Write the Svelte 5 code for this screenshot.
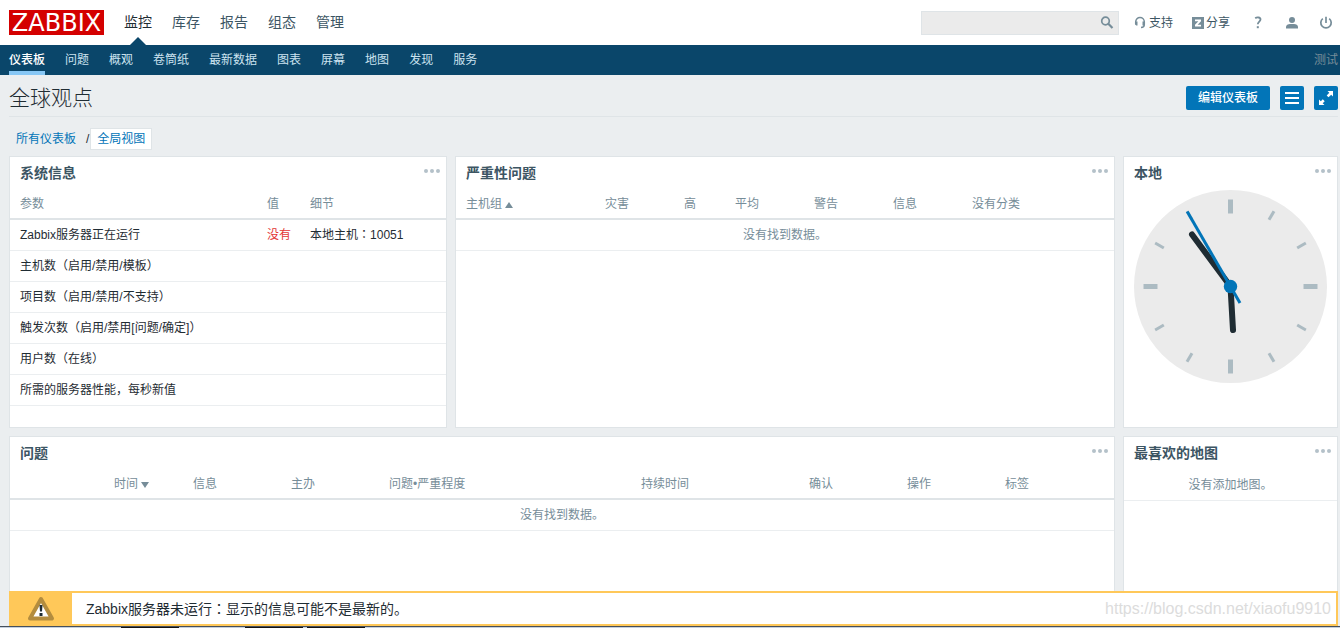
<script lang="ts">
	interface Column {
		label: string
		width?: number
		sort?: 'asc' | 'desc'
	}

	const mainMenu = ['监控', '库存', '报告', '组态', '管理']
	const subMenu = ['仪表板', '问题', '概观', '卷筒纸', '最新数据', '图表', '屏幕', '地图', '发现', '服务']

	const infoColumns: Column[] = [{ label: '参数', width: 247 }, { label: '值', width: 43 }, { label: '细节' }]
	const infoRows = [
		{ name: 'Zabbix服务器正在运行', value: '没有', details: '本地主机：10051' },
		{ name: '主机数（启用/禁用/模板）' },
		{ name: '项目数（启用/禁用/不支持）' },
		{ name: '触发次数（启用/禁用[问题/确定]）' },
		{ name: '用户数（在线）' },
		{ name: '所需的服务器性能，每秒新值' }
	]

	const severityColumns: Column[] = [
		{ label: '主机组', width: 139, sort: 'asc' },
		{ label: '灾害', width: 79 },
		{ label: '高', width: 51 },
		{ label: '平均', width: 79 },
		{ label: '警告', width: 79 },
		{ label: '信息', width: 79 },
		{ label: '没有分类' }
	]

	const problemColumns: Column[] = [
		{ label: '', width: 94 },
		{ label: '时间', width: 79, sort: 'desc' },
		{ label: '信息', width: 98 },
		{ label: '主办', width: 98 },
		{ label: '问题•严重程度', width: 252 },
		{ label: '持续时间', width: 168 },
		{ label: '确认', width: 98 },
		{ label: '操作', width: 98 },
		{ label: '标签' }
	]

	const hours = Array.from({ length: 12 }, (_, i) => i)
</script>

<!-- full-width punctuation sits in the middle of its box -->
{#snippet text(value: string)}
	{#each value.split(/([（）：])/) as part}{#if /^[（）：]$/.test(part)}<span class="punct">{part}</span>{:else}{part}{/if}{/each}
{/snippet}

{#snippet widgetHead(title: string)}
	<header class="widget-head">
		<h2>{title}</h2>
		<button class="dots" aria-label="{title} 操作">
			<svg width="16" height="4" viewBox="0 0 16 4" fill="#b4c1c9">
				<circle cx="2" cy="2" r="2" />
				<circle cx="8" cy="2" r="2" />
				<circle cx="14" cy="2" r="2" />
			</svg>
		</button>
	</header>
{/snippet}

{#snippet tableHead(columns: Column[])}
	<colgroup>
		{#each columns as column}
			<col style={column.width ? `width: ${column.width}px` : undefined} />
		{/each}
	</colgroup>
	<thead>
		<tr>
			{#each columns as column}
				<th>
					{#if column.sort}
						<a href="#sort">{column.label}<span class="arrow {column.sort}"></span></a>
					{:else}
						{column.label}
					{/if}
				</th>
			{/each}
		</tr>
	</thead>
{/snippet}

{#snippet emptyRow(columns: Column[])}
	<tbody>
		<tr><td class="empty" colspan={columns.length}>没有找到数据。</td></tr>
	</tbody>
{/snippet}

<div class="page">
	<header class="top">
		<a class="logo" href="#home">ZABBIX</a>
		<nav class="main-menu">
			{#each mainMenu as item, i}
				<a href="#menu" class:active={i === 0}>{item}</a>
			{/each}
		</nav>
		<form class="search">
			<input type="text" aria-label="搜索" />
			<button type="button" aria-label="搜索">
				<svg width="14" height="14" viewBox="0 0 14 14" fill="none" stroke="#768d99">
					<circle cx="5.5" cy="5" r="3.8" stroke-width="1.7" />
					<path d="M8.3 7.8l4.2 4.2" stroke-width="2.2" />
				</svg>
			</button>
		</form>
		<a class="tool support" href="#support">
			<svg width="12" height="14" viewBox="0 0 12 14">
				<path d="M1.7 8V5.800a4.300 4.300 0 0 1 8.600 0V8.500c0 2-1 3-3.300 3" fill="none" stroke="#768d99" stroke-width="1.5" />
				<path d="M1 5.500h2.500v4H2.300L1 8.500zM11 5.500H8.500v4h1.200L11 8.500z" fill="#768d99" />
			</svg>
			支持
		</a>
		<a class="tool share" href="#share">
			<svg width="12" height="12" viewBox="0 0 12 12">
				<path d="M0 0h12v12H0z" fill="#768d99" />
				<path d="M3 2.500h6v1.800L5.600 7.700H9v1.800H3V7.700l3.400-3.400H3z" fill="#fff" />
			</svg>
			分享
		</a>
		<a class="tool icon" href="#help" aria-label="帮助">
			<svg width="14" height="14" viewBox="0 0 14 14">
				<path d="M4.200 2.300C5.800 1 9.500 1.100 9.500 3.500c0 2-2.700 2.200-2.700 4.800" fill="none" stroke="#768d99" stroke-width="1.8" />
				<path d="M5.800 10.200h2v2h-2z" fill="#768d99" />
			</svg>
		</a>
		<a class="tool icon" href="#profile" aria-label="用户">
			<svg width="14" height="14" viewBox="0 0 14 14" fill="#768d99">
				<circle cx="7" cy="4" r="3" />
				<path d="M1 12.500V11C1 9 3 8.300 5 8h4c2 .3 4 1 4 3v1.500z" />
			</svg>
		</a>
		<a class="tool icon" href="#logout" aria-label="退出">
			<svg width="14" height="14" viewBox="0 0 14 14" fill="none" stroke="#768d99" stroke-width="1.7">
				<path d="M3.800 2.600a5.200 5.200 0 1 0 6.400 0M7 .8v6.200" />
			</svg>
		</a>
	</header>

	<nav class="sub-menu">
		{#each subMenu as item, i}
			<a href="#view" class:active={i === 0}>{item}</a>
		{/each}
		<span class="server">测试</span>
	</nav>

	<main>
		<div class="title-bar">
			<h1>全球观点</h1>
			<button class="btn">编辑仪表板</button>
			<button class="btn square" aria-label="菜单">
				<svg width="16" height="16" viewBox="0 0 16 16" stroke="#fff" stroke-width="2">
					<path d="M1 3h14M1 8h14M1 13h14" />
				</svg>
			</button>
			<button class="btn square" aria-label="全屏">
				<svg width="16" height="16" viewBox="0 0 16 16">
					<path d="M9.500 1H15v5.500l-1.800-1.800-2.700 2.600-1.800-1.800 2.600-2.700zM6.500 15H1V9.500l1.800 1.800 2-2L6.700 11.200l-2 2z" fill="#fff" />
				</svg>
			</button>
		</div>

		<div class="crumbs">
			<a href="#all">所有仪表板</a>
			<span class="slash">/</span>
			<a class="current" href="#global">全局视图</a>
		</div>

		<div class="dashboard">
			<section class="widget">
				{@render widgetHead('系统信息')}
				<table>
					{@render tableHead(infoColumns)}
					<tbody>
						{#each infoRows as row}
							<tr>
								<td>{@render text(row.name)}</td>
								<td class="red">{row.value ?? ''}</td>
								<td>{@render text(row.details ?? '')}</td>
							</tr>
						{/each}
					</tbody>
				</table>
			</section>

			<section class="widget">
				{@render widgetHead('严重性问题')}
				<table>
					{@render tableHead(severityColumns)}
					{@render emptyRow(severityColumns)}
				</table>
			</section>

			<section class="widget">
				{@render widgetHead('本地')}
				<svg class="clock" viewBox="-96.5 -96.5 193 193">
					<circle r="96.5" fill="#ebebeb" />
					{#each hours as hour}
						{#if hour % 3 === 0}
							<path d="M0-87v14" stroke="#acbbc2" stroke-width="5" transform="rotate({hour * 30})" />
						{:else}
							<path d="M0-87v10" stroke="#acbbc2" stroke-width="3" transform="rotate({hour * 30})" />
						{/if}
					{/each}
					<path d="M0 0L2.500 43.500M0 0L-38.500-52" stroke="#1f2c33" stroke-width="6" stroke-linecap="round" />
					<path d="M9.500 16.500L-43.300-75" stroke="#0275b8" stroke-width="3" />
					<circle r="6.700" fill="#0275b8" />
				</svg>
			</section>

			<section class="widget wide">
				{@render widgetHead('问题')}
				<table>
					{@render tableHead(problemColumns)}
					{@render emptyRow(problemColumns)}
				</table>
			</section>

			<section class="widget">
				{@render widgetHead('最喜欢的地图')}
				<p class="empty no-maps">没有添加地图。</p>
			</section>
		</div>
	</main>

	<footer>
		<div class="message" role="alert">
			<div class="warn">
				<svg width="28" height="26" viewBox="0 0 28 26">
					<path d="M14 3L25 22.500H3z" fill="#fff" stroke="#b38c3e" stroke-width="4" stroke-linejoin="round" />
					<path d="M12.500 9h3l-.5 6.500h-2zM12.500 17h3v3h-3z" fill="#1f2c33" />
				</svg>
			</div>
			<p>{@render text('Zabbix服务器未运行：显示的信息可能不是最新的。')}</p>
			<span class="watermark">https://blog.csdn.net/xiaofu9910</span>
		</div>
		<div class="taskbar"><i></i><i></i><i></i></div>
	</footer>
</div>

<style>
	:global(body) {
		background: #ebeef0;
		overflow: hidden;
	}

	.page {
		height: 100vh;
		overflow: hidden;
		color: #1f2c33;
		font: 12px/18px 'Liberation Sans', 'Noto Sans CJK SC', sans-serif;
	}

	.punct {
		font-family: 'Noto Sans CJK TC', sans-serif;
		line-height: 0;
	}

	a {
		color: inherit;
		text-decoration: none;
	}

	svg {
		display: block;
		flex: none;
	}

	h1,
	h2,
	p {
		margin: 0;
	}

	button {
		padding: 0;
		border: 0;
		background: none;
		font: inherit;
	}

	.top {
		display: flex;
		align-items: center;
		height: 45px;
		padding: 0 7px 0 9px;
		background: #fff;
	}

	.logo {
		width: 95px;
		height: 25px;
		margin-right: 20px;
		background: #d40000;
		color: #fff;
		font: 24px/26px 'DejaVu Sans', sans-serif;
		text-align: center;
	}

	.main-menu {
		display: flex;
		gap: 20px;
		margin-right: auto;
		color: #3c5563;
		font-size: 14px;
		line-height: 45px;
	}

	.main-menu a {
		position: relative;
	}

	.main-menu .active {
		color: #1f2c33;
	}

	.main-menu .active::after {
		content: '';
		position: absolute;
		bottom: 0;
		left: 6px;
		border: 8px solid transparent;
		border-top: 0;
		border-bottom-color: #0a466a;
	}

	.search {
		display: flex;
		align-items: center;
		box-sizing: border-box;
		width: 198px;
		height: 24px;
		margin-right: 15px;
		padding-right: 4px;
		border: 1px solid #dfe4e7;
		background: #ebebeb;
	}

	.search input {
		flex: 1;
		min-width: 0;
		border: 0;
		background: none;
	}

	.tool {
		display: flex;
		align-items: center;
		color: #3c5563;
	}

	.support {
		gap: 3px;
		margin-right: 19px;
	}

	.share {
		gap: 2px;
		margin-right: 1px;
	}

	.icon {
		margin-left: 20px;
	}

	.sub-menu {
		display: flex;
		gap: 20px;
		height: 30px;
		padding: 0 2px 0 9px;
		background: #0a466a;
		color: #cce3f0;
		line-height: 30px;
	}

	.sub-menu .active {
		box-sizing: border-box;
		border-bottom: 4px solid #87c7f5;
		color: #fff;
		font-weight: 500;
	}

	.server {
		margin-left: auto;
		color: #768d99;
	}

	main {
		padding: 0 2px 0 9px;
	}

	.title-bar {
		display: flex;
		align-items: center;
		gap: 10px;
		padding: 9px 0 5px;
		border-bottom: 1px solid #dfe4e7;
	}

	h1 {
		margin-right: auto;
		font-size: 21px;
		font-weight: 300;
		line-height: 27px;
	}

	.btn {
		height: 24px;
		padding: 0 12px;
		border-radius: 2px;
		background: #0275b8;
		color: #fff;
		font-weight: 500;
	}

	.square {
		padding: 0 4px;
	}

	.crumbs {
		display: flex;
		align-items: center;
		padding: 11px 0 6px 7px;
		color: #0275b8;
	}

	.slash {
		margin-left: 10px;
		color: #1f2c33;
	}

	.current {
		margin-left: 1px;
		padding: 1px 6px;
		border: 1px solid #dfe4e7;
		background: #fff;
	}

	.dashboard {
		display: grid;
		grid-template-columns: 438fr 660fr 215fr;
		grid-auto-rows: 272px;
		gap: 8px;
	}

	.widget {
		border: 1px solid #dfe4e7;
		background: #fff;
	}

	.wide {
		grid-column: span 2;
	}

	.widget-head {
		display: flex;
		align-items: flex-start;
		justify-content: space-between;
		height: 33px;
		padding: 0 6px 0 10px;
	}

	h2 {
		color: #3c5563;
		font-size: 14px;
		font-weight: 700;
		line-height: 33px;
	}

	.dots {
		margin-top: 12px;
	}

	table {
		width: 100%;
		border-collapse: separate;
		border-spacing: 0;
		table-layout: fixed;
	}

	th,
	td {
		padding: 6px 0 6px 10px;
		border-bottom: 1px solid #ebeef0;
		text-align: left;
		white-space: nowrap;
	}

	th {
		padding: 5px 0 5px 10px;
		border-bottom: 2px solid #dfe4e7;
		color: #768d99;
		font-weight: 400;
	}

	.red {
		color: #e33734;
	}

	.empty {
		padding: 6px 10px;
		color: #768d99;
		text-align: center;
	}

	.no-maps {
		border-bottom: 1px solid #ebeef0;
	}

	.arrow {
		display: inline-block;
		margin-left: 3px;
		border: 4px solid transparent;
	}

	.asc {
		border-top: 0;
		border-bottom: 6px solid #768d99;
	}

	.desc {
		border-top: 6px solid #768d99;
		border-bottom: 0;
	}

	.clock {
		width: 193px;
		margin: 0 auto;
	}

	footer {
		position: fixed;
		right: 0;
		bottom: 0;
		left: 0;
	}

	.message {
		display: flex;
		align-items: center;
		height: 31px;
		margin: 0 2px 0 9px;
		border: 2px solid #ffc859;
		background: #fff;
		font-size: 14px;
		line-height: 20px;
	}

	.warn {
		display: flex;
		justify-content: center;
		align-items: center;
		width: 60px;
		height: 31px;
		margin-right: 14px;
		border-right: 1px solid #ffc859;
		background: #ffc859;
	}

	.watermark {
		margin-left: auto;
		padding-right: 5px;
		color: #dcdcdc;
		font-size: 16px;
	}

	.taskbar {
		display: flex;
		gap: 4px;
		height: 1px;
		padding-left: 121px;
		border-top: 1px solid #46505c;
		background: #c5d0de;
	}

	.taskbar i {
		width: 58px;
		background: #111;
	}

	.taskbar i:first-child {
		margin-right: 62px;
	}
</style>
